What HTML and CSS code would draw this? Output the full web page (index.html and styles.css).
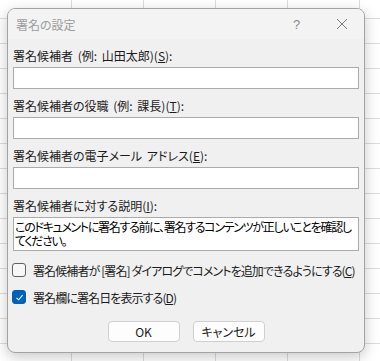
FILE: index.html
```html
<!doctype html>
<html lang="ja">
<head>
    <meta charset="UTF-8">
    <title>署名の設定</title>
    <link rel="stylesheet" href="styles.css">
</head>
<body>
    <div class="dialog" id="dialog">
        <div class="dialog-title">
            <span class="dialog-title-text">署名の設定</span>
            <span class="title-btn">?</span>
            <span class="title-btn" id="closeBtn">
                <svg width="12" height="12" viewBox="0 0 12 12"><path d="M1 1 L11 11 M11 1 L1 11" stroke="#7a7a7a" stroke-width="1" fill="none"/></svg>
            </span>
        </div>
        <div class="dialog-body">
            <div class="field">
                <label class="field-label" for="signer">署名候補者 (例: 山田太郎)(<u>S</u>):</label>
                <input type="text" class="field-input" id="signer">
            </div>
            <div class="field">
                <label class="field-label" for="title">署名候補者の役職 (例: 課長)(<u>T</u>):</label>
                <input type="text" class="field-input" id="title">
            </div>
            <div class="field">
                <label class="field-label" for="mail">署名候補者の電子メール アドレス(<u>E</u>):</label>
                <input type="text" class="field-input" id="mail">
            </div>
            <div class="field">
                <label class="field-label" for="note">署名候補者に対する説明(<u>I</u>):</label>
                <textarea class="field-text" id="note">このドキュメントに署名する前に、署名するコンテンツが正しいことを確認してください。</textarea>
            </div>
            <div class="checks">
                <label class="check">
                    <span class="check-box"></span>
                    <span class="check-text">署名候補者が [署名] ダイアログでコメントを追加できるようにする(<u>C</u>)</span>
                </label>
                <label class="check">
                    <span class="check-box checked">
                        <svg width="9" height="9" viewBox="0 0 9 9"><path d="M1.5 4.8 L3.6 6.8 L7.6 2.2" stroke="#fff" stroke-width="1.1" fill="none"/></svg>
                    </span>
                    <span class="check-text">署名欄に署名日を表示する(<u>D</u>)</span>
                </label>
            </div>
            <div class="buttons">
                <button class="btn">OK</button>
                <button class="btn">キャンセル</button>
            </div>
        </div>
    </div>
</body>
</html>
```

FILE: styles.css
```css
body {
    margin: 0;
    width: 380px;
    height: 361px;
    overflow: hidden;
    background-color: #fff;
    background-image:
        linear-gradient(to right, #dcdcdc 1px, transparent 1px),
        linear-gradient(to bottom, #dcdcdc 1px, transparent 1px);
    background-size: 72px 100%, 100% 25px;
    background-position: -1px 0, 0 18px;
    font-family: "Noto Sans CJK JP", "Noto Sans", sans-serif;
    font-size: 12px;
    color: #1b1b1b;
}
.dialog {
    box-sizing: border-box;
    width: 358px;
    margin: 8px 0 0 7px;
    background: #f0f0f0;
    border: 1px solid #a3a3a3;
    border-radius: 8px;
    box-shadow: 0 4px 14px rgba(0, 0, 0, 0.22);
    overflow: hidden;
}
.dialog-title {
    display: flex;
    align-items: center;
    height: 30px;
    background: #f3f3f3;
}
.dialog-title-text {
    flex: 1;
    padding-left: 8px;
    color: #9c9c9c;
    font-feature-settings: "palt" 1;
}
.title-btn {
    display: flex;
    align-items: center;
    justify-content: center;
    width: 45px;
    height: 30px;
    color: #8a8a8a;
    font-family: "Liberation Sans", sans-serif;
    font-size: 13px;
}
.dialog-body {
    padding: 9px 5px 10px 5px;
}
.field {
    margin-bottom: 9px;
}
.field-label {
    display: block;
    line-height: 16px;
    margin-bottom: 3px;
    font-feature-settings: "palt" 1;
    word-spacing: 2px;
}
.field-input {
    display: block;
    box-sizing: border-box;
    width: 100%;
    height: 22px;
    margin: 0;
    border: 1px solid #ababab;
    background: #fff;
    font: inherit;
}
.field-text {
    display: block;
    box-sizing: border-box;
    width: 100%;
    height: 34px;
    margin: 0;
    padding: 2px 1px;
    border: 1px solid #ababab;
    background: #fff;
    font: inherit;
    line-height: 14px;
    color: #000;
    resize: none;
    overflow: hidden;
    font-feature-settings: "palt" 1;
    letter-spacing: -1.3px;
}
.checks {
    display: flex;
    flex-direction: column;
    gap: 7px;
    margin-top: 9px;
}
.check {
    display: flex;
    align-items: center;
    gap: 7px;
    height: 20px;
    font-feature-settings: "palt" 1;
}
.check-text {
    white-space: nowrap;
    letter-spacing: -0.9px;
}
.check-box {
    box-sizing: border-box;
    display: flex;
    align-items: center;
    justify-content: center;
    width: 14px;
    height: 14px;
    margin-left: -1px;
    border: 1px solid #616161;
    border-radius: 3px;
    background: #f7f7f7;
}
.check-box.checked {
    background: #0061b8;
    border-color: #0061b8;
}
.buttons {
    display: flex;
    justify-content: center;
    gap: 13px;
    margin-top: 14px;
}
.btn {
    box-sizing: border-box;
    width: 72px;
    height: 21px;
    padding: 0;
    border: 1px solid #d0d0d0;
    border-radius: 4px;
    background: #fdfdfd;
    font: inherit;
    color: #1b1b1b;
    font-feature-settings: "palt" 1;
}
```
